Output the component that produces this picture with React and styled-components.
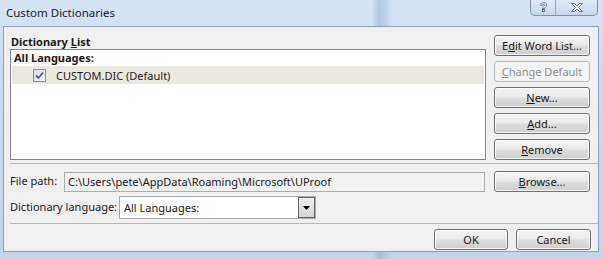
import React from 'react';
import styled, { createGlobalStyle } from 'styled-components';

const Global = createGlobalStyle`
  html, body { margin: 0; padding: 0; }
  body {
    width: 603px;
    height: 259px;
    overflow: hidden;
    background: #c3d7ee;
    font-family: "Noto Sans", "Open Sans", sans-serif;
    font-size: 11px;
    color: #1a1a1a;
  }
  #root { width: 603px; height: 259px; }
`;

const Window = styled.div`
  width: 603px;
  height: 259px;
  display: flex;
  flex-direction: column;
  background:
    linear-gradient(90deg, rgba(255,255,255,0) 0, rgba(255,255,255,0) 372px, rgba(130,158,192,0.4) 379px, rgba(150,175,205,0.35) 385px, rgba(255,255,255,0) 392px),
    linear-gradient(180deg, #d5e3f5 0%, #c9dbf0 40%, #c0d5ed 100%);
`;

const TitleBar = styled.div`
  height: 26px;
  flex: none;
  display: flex;
  justify-content: space-between;
  align-items: flex-start;
  padding: 0 5px 0 6px;
`;

const Title = styled.div`
  font-size: 11.5px;
  line-height: 25px;
  color: #222;
`;

const CaptionGroup = styled.div`
  display: flex;
  height: 15px;
  border: 1px solid #7d93b0;
  border-top: none;
  border-radius: 0 0 5px 5px;
  background: linear-gradient(180deg, #dfeaf7 0%, #d3e2f3 50%, #c3d6ee 100%);
  overflow: hidden;
`;

const CaptionButton = styled.div`
  width: ${p => p.$w}px;
  display: flex;
  align-items: center;
  justify-content: center;
  border-left: ${p => (p.$first ? 'none' : '1px solid #8ea3bf')};
`;

const Client = styled.div`
  flex: 1;
  margin: 0 4px 7px 3px;
  border: 1px solid #8e9fb4;
  background: #f0f0f0;
  display: flex;
  flex-direction: column;
  padding: 8px 7px 0 6px;
`;

const TopSection = styled.div`
  display: grid;
  grid-template-columns: 476px 96px;
  column-gap: 8px;
`;

const ListColumn = styled.div`
  display: flex;
  flex-direction: column;
`;

const GroupLabel = styled.div`
  font-weight: bold;
  height: 14px;
  line-height: 13px;
  padding-left: 1px;
`;

const ListBox = styled.div`
  height: 108px;
  border: 1px solid #828790;
  background: #fff;
  padding: 1px 1px 0 1px;
`;

const ListHeader = styled.div`
  font-weight: bold;
  height: 15px;
  line-height: 14px;
  padding-left: 2px;
`;

const ListRow = styled.div`
  height: 18px;
  display: flex;
  align-items: center;
  padding-left: 21px;
  gap: 10px;
  background: ${p => (p.$selected ? '#ebe9df' : 'transparent')};
`;

const CheckBox = styled.span`
  width: 11px;
  height: 11px;
  border: 1px solid #8f8f8f;
  background: linear-gradient(135deg, #dcdcdc 0%, #f6f6f6 100%);
  display: flex;
  align-items: center;
  justify-content: center;
`;

const ButtonColumn = styled.div`
  display: flex;
  flex-direction: column;
  gap: 5px;
`;

const Button = styled.div`
  height: 21px;
  width: ${p => (p.$w ? `${p.$w}px` : 'auto')};
  box-sizing: border-box;
  border: 1px solid ${p => (p.$disabled ? '#b5b9bd' : '#707070')};
  border-radius: 3px;
  display: flex;
  align-items: center;
  justify-content: center;
  color: ${p => (p.$disabled ? '#8d8d8d' : '#1a1a1a')};
  background: ${p =>
    p.$disabled
      ? '#f4f4f4'
      : 'linear-gradient(180deg, #f3f3f3 0%, #ebebeb 48%, #dddddd 52%, #cfcfcf 100%)'};
  box-shadow: inset 0 0 0 1px ${p => (p.$disabled ? 'transparent' : 'rgba(255,255,255,0.75)')};
  line-height: 1;
  padding-bottom: 1px;
`;

const Separator = styled.div`
  height: 1px;
  background: #a9bbd2;
  margin: ${p => p.$top}px -7px 0 0;
`;

const FormRow = styled.div`
  display: grid;
  grid-template-columns: ${p => p.$cols};
  align-items: center;
  margin-top: ${p => p.$top}px;
`;

const Label = styled.div`
  padding-bottom: 2px;
`;

const TextInput = styled.div`
  height: 20px;
  box-sizing: border-box;
  border: 1px solid #abadb3;
  background: #f2f2f2;
  display: flex;
  align-items: center;
  padding: 0 0 1px 3px;
  margin-right: 9px;
`;

const Select = styled.div`
  height: 23px;
  box-sizing: border-box;
  border: 1px solid #a6acb4;
  background: #fff;
  display: flex;
  align-items: center;
  justify-content: space-between;
  padding-left: 4px;
`;

const SelectArrow = styled.div`
  width: 17px;
  height: 21px;
  box-sizing: border-box;
  border: 1px solid #666;
  background: linear-gradient(180deg, #efefef 0%, #e2e2e2 50%, #d4d4d4 100%);
  display: flex;
  align-items: center;
  justify-content: center;
`;

const FooterRow = styled.div`
  display: flex;
  justify-content: flex-end;
  gap: 8px;
  margin-top: 5px;
`;

const U = styled.span`
  text-decoration: underline;
  text-underline-offset: 1px;
`;

function HelpIcon() {
  return (
    <svg width="9" height="11" viewBox="0 0 9 11">
      <path d="M1.5 3.2 C1.5 1.4 3 0.7 4.5 0.7 C6.2 0.7 7.5 1.6 7.5 3.1 C7.5 4.8 5.5 5 5.5 6.6 L3.5 6.6 C3.5 4.6 5.5 4.4 5.5 3.2 C5.5 2.6 5.1 2.3 4.5 2.3 C3.9 2.3 3.5 2.7 3.5 3.2 Z" fill="#fff" stroke="#4d5d74" strokeWidth="0.8" />
      <rect x="3.5" y="7.6" width="2" height="2" fill="#fff" stroke="#4d5d74" strokeWidth="0.8" />
    </svg>
  );
}

function CloseIcon() {
  return (
    <svg width="12" height="9" viewBox="0 0 12 9">
      <path d="M0.5 0.5 L3.5 0.5 L6 3 L8.5 0.5 L11.5 0.5 L7.5 4.5 L11.5 8.5 L8.5 8.5 L6 6 L3.5 8.5 L0.5 8.5 L4.5 4.5 Z" fill="#fff" stroke="#4d5d74" strokeWidth="0.8" strokeLinejoin="round" />
    </svg>
  );
}

function CheckMark() {
  return (
    <svg width="9" height="9" viewBox="0 0 9 9">
      <path d="M1 4.5 L3.5 7 L8 1.5" fill="none" stroke="#4b61a0" strokeWidth="1.8" />
    </svg>
  );
}

function DownTriangle() {
  return (
    <svg width="7" height="4" viewBox="0 0 7 4">
      <path d="M0 0 L7 0 L3.5 4 Z" fill="#000" />
    </svg>
  );
}

export default function App() {
  return (
    <>
      <Global />
      <Window>
        <TitleBar>
          <Title>Custom Dictionaries</Title>
          <CaptionGroup>
            <CaptionButton $w={24} $first>
              <HelpIcon />
            </CaptionButton>
            <CaptionButton $w={41}>
              <CloseIcon />
            </CaptionButton>
          </CaptionGroup>
        </TitleBar>
        <Client>
          <TopSection>
            <ListColumn>
              <GroupLabel>
                Dictionary <U>L</U>ist
              </GroupLabel>
              <ListBox>
                <ListHeader>All Languages:</ListHeader>
                <ListRow $selected>
                  <CheckBox>
                    <CheckMark />
                  </CheckBox>
                  <span>CUSTOM.DIC (Default)</span>
                </ListRow>
              </ListBox>
            </ListColumn>
            <ButtonColumn>
              <Button>
                E<U>d</U>it Word List...
              </Button>
              <Button $disabled>
                <U>C</U>hange Default
              </Button>
              <Button>
                <U>N</U>ew...
              </Button>
              <Button>
                <U>A</U>dd...
              </Button>
              <Button>
                <U>R</U>emove
              </Button>
            </ButtonColumn>
          </TopSection>
          <Separator $top={3} />
          <FormRow $cols="54px 430px 96px" $top={7}>
            <Label>File path:</Label>
            <TextInput>C:\Users\pete\AppData\Roaming\Microsoft\UProof</TextInput>
            <Button>
              <U>B</U>rowse...
            </Button>
          </FormRow>
          <FormRow $cols="109px 197px" $top={4}>
            <Label>Dictionary language:</Label>
            <Select>
              <span>All Languages:</span>
              <SelectArrow>
                <DownTriangle />
              </SelectArrow>
            </Select>
          </FormRow>
          <Separator $top={4} />
          <FooterRow>
            <Button $w={74}>OK</Button>
            <Button $w={75}>Cancel</Button>
          </FooterRow>
        </Client>
      </Window>
    </>
  );
}
